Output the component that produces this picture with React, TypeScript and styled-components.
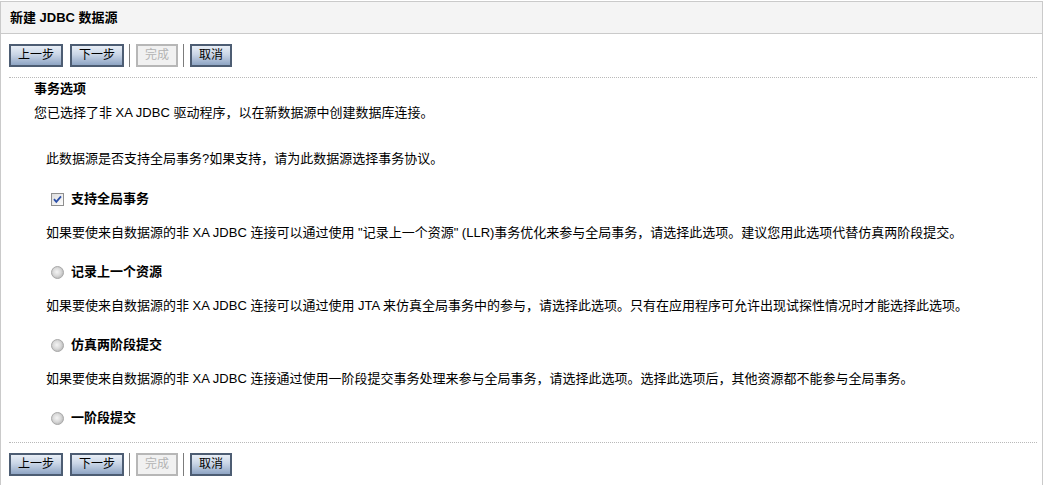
import React from "react";
import styled, { createGlobalStyle } from "styled-components";

const GlobalStyle = createGlobalStyle`
  html, body { margin: 0; padding: 0; background: #ffffff; }
  body {
    font-family: "Liberation Sans", "Noto Sans CJK SC", sans-serif;
    color: #000000;
    font-size: 13px;
  }
`;

const Page = styled.div`
  padding-top: 1px;
  width: 1043px;
`;

const Panel = styled.div`
  box-sizing: border-box;
  width: 1043px;
  min-height: 484px;
  border-top: 1px solid #cacaca;
  border-left: 1px solid #cacaca;
  border-right: 1px solid #cacaca;
`;

const Header = styled.div`
  height: 31px;
  background: #f4f4f4;
  border-bottom: 1px solid #cacaca;
  padding-left: 9px;
  display: flex;
  align-items: center;
`;

const Title = styled.h1`
  margin: 0;
  font-size: 13px;
  font-weight: bold;
  line-height: 16px;
`;

const Toolbar = styled.div`
  display: flex;
  align-items: center;
  padding: 10px 0 10px 8px;
`;

const Button = styled.button<{ $gapLeft?: number }>`
  box-sizing: border-box;
  height: 23px;
  margin: 0 0 0 ${(p) => p.$gapLeft ?? 0}px;
  padding: 0 7px;
  border: 2px solid #4d5d73;
  background: linear-gradient(to bottom, #e8eef6 0%, #c9d5e6 45%, #8fa5c4 100%);
  font-family: "Liberation Sans", "Noto Sans CJK SC", sans-serif;
  font-size: 12px;
  line-height: 17px;
  color: #000000;
  cursor: pointer;

  &:disabled {
    border-color: #b7b7b7;
    background: #f1f1f1;
    color: #b3b3b3;
    cursor: default;
  }
`;

const Separator = styled.span`
  width: 1px;
  height: 23px;
  background: #7c7c7c;
  margin: 0 6px 0 5px;
`;

const Divider = styled.div`
  margin: 0 5px 0 8px;
  border-top: 1px dotted #b9b9b9;
`;

const Content = styled.div`
  padding-left: 33px;
`;

const Heading = styled.h2`
  margin: 3px 0 0;
  font-size: 13px;
  font-weight: bold;
  line-height: 16px;
`;

const Intro = styled.p`
  margin: 8px 0 0;
  font-size: 13px;
  line-height: 16px;
`;

const Options = styled.div`
  padding-left: 12px;
  padding-bottom: 16px;
`;

const Question = styled.p`
  margin: 30px 0 0;
  font-size: 13px;
  line-height: 16px;
`;

const OptionRow = styled.label<{ $first?: boolean }>`
  display: flex;
  align-items: center;
  gap: 7px;
  margin-top: ${(p) => (p.$first ? 24 : 23)}px;
  padding-left: 5px;
  height: 16px;
`;

const OptionLabel = styled.span`
  font-size: 13px;
  font-weight: bold;
  line-height: 16px;
`;

const Description = styled.p`
  margin: 18px 0 0;
  font-size: 13px;
  line-height: 16px;
`;

const CheckIcon = () => (
  <svg width="13" height="13" viewBox="0 0 13 13">
    <defs>
      <linearGradient id="cbg" x1="0" y1="0" x2="1" y2="1">
        <stop offset="0" stopColor="#dcdcdc" />
        <stop offset="1" stopColor="#ffffff" />
      </linearGradient>
    </defs>
    <rect x="0.5" y="0.5" width="12" height="12" fill="url(#cbg)" stroke="#8f8f8f" />
    <path d="M3 6.2 L5.3 8.8 L10 3.4" fill="none" stroke="#2b4fa8" strokeWidth="1.8" />
  </svg>
);

const RadioIcon = ({ id }: { id: string }) => (
  <svg width="13" height="13" viewBox="0 0 13 13">
    <defs>
      <radialGradient id={id} cx="0.45" cy="0.45" r="0.6">
        <stop offset="0" stopColor="#f4f4f4" />
        <stop offset="0.55" stopColor="#d9d9d9" />
        <stop offset="1" stopColor="#b4b4b4" />
      </radialGradient>
    </defs>
    <circle cx="6.5" cy="6.5" r="6" fill={`url(#${id})`} stroke="#a9a9a9" />
  </svg>
);

const ButtonBar = () => (
  <Toolbar>
    <Button>上一步</Button>
    <Button $gapLeft={7}>下一步</Button>
    <Separator />
    <Button disabled>完成</Button>
    <Separator />
    <Button>取消</Button>
  </Toolbar>
);

export default function App() {
  return (
    <>
      <GlobalStyle />
      <Page>
        <Panel>
          <Header>
            <Title>新建 JDBC 数据源</Title>
          </Header>
          <ButtonBar />
          <Divider />
          <Content>
            <Heading>事务选项</Heading>
            <Intro>您已选择了非 XA JDBC 驱动程序，以在新数据源中创建数据库连接。</Intro>
            <Options>
              <Question>此数据源是否支持全局事务?如果支持，请为此数据源选择事务协议。</Question>
              <OptionRow $first>
                <CheckIcon />
                <OptionLabel>支持全局事务</OptionLabel>
              </OptionRow>
              <Description>
                如果要使来自数据源的非 XA JDBC 连接可以通过使用 "记录上一个资源" (LLR)事务优化来参与全局事务，请选择此选项。建议您用此选项代替仿真两阶段提交。
              </Description>
              <OptionRow>
                <RadioIcon id="r1" />
                <OptionLabel>记录上一个资源</OptionLabel>
              </OptionRow>
              <Description>
                如果要使来自数据源的非 XA JDBC 连接可以通过使用 JTA 来仿真全局事务中的参与，请选择此选项。只有在应用程序可允许出现试探性情况时才能选择此选项。
              </Description>
              <OptionRow>
                <RadioIcon id="r2" />
                <OptionLabel>仿真两阶段提交</OptionLabel>
              </OptionRow>
              <Description>
                如果要使来自数据源的非 XA JDBC 连接通过使用一阶段提交事务处理来参与全局事务，请选择此选项。选择此选项后，其他资源都不能参与全局事务。
              </Description>
              <OptionRow>
                <RadioIcon id="r3" />
                <OptionLabel>一阶段提交</OptionLabel>
              </OptionRow>
            </Options>
          </Content>
          <Divider />
          <ButtonBar />
        </Panel>
      </Page>
    </>
  );
}
